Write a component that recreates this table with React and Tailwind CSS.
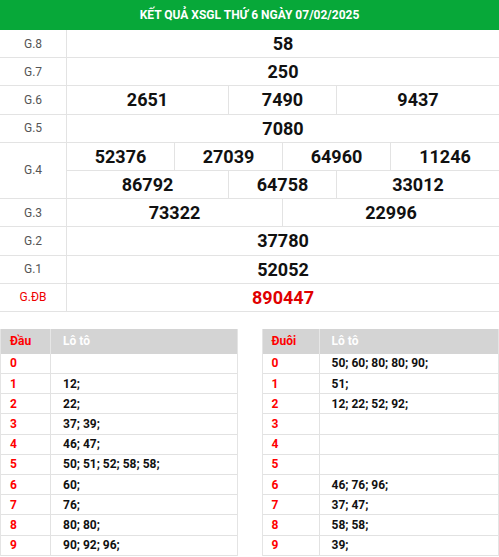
import React from 'react'

const font = { fontFamily: 'Roboto, "Liberation Sans", sans-serif' }

const rows = [
  { label: 'G.8', lines: [[{ n: '58', span: 'col-span-24' }]] },
  { label: 'G.7', lines: [[{ n: '250', span: 'col-span-24' }]] },
  {
    label: 'G.6',
    lines: [[
      { n: '2651', span: 'col-span-9' },
      { n: '7490', span: 'col-span-6' },
      { n: '9437', span: 'col-span-9' },
    ]],
  },
  { label: 'G.5', lines: [[{ n: '7080', span: 'col-span-24' }]] },
  {
    label: 'G.4',
    lines: [
      [
        { n: '52376', span: 'col-span-6' },
        { n: '27039', span: 'col-span-6' },
        { n: '64960', span: 'col-span-6' },
        { n: '11246', span: 'col-span-6' },
      ],
      [
        { n: '86792', span: 'col-span-9' },
        { n: '64758', span: 'col-span-6' },
        { n: '33012', span: 'col-span-9' },
      ],
    ],
  },
  {
    label: 'G.3',
    lines: [[
      { n: '73322', span: 'col-span-12' },
      { n: '22996', span: 'col-span-12' },
    ]],
  },
  { label: 'G.2', lines: [[{ n: '37780', span: 'col-span-24' }]] },
  { label: 'G.1', lines: [[{ n: '52052', span: 'col-span-24' }]] },
  { label: 'G.ĐB', lines: [[{ n: '890447', span: 'col-span-24' }]], special: true },
]

const dau = ['', '12;', '22;', '37; 39;', '46; 47;', '50; 51; 52; 58; 58;', '60;', '76;', '80; 80;', '90; 92; 96;']
const duoi = ['50; 60; 80; 80; 90;', '51;', '12; 22; 52; 92;', '', '', '', '46; 76; 96;', '37; 47;', '58; 58;', '39;']

const LotoTable = ({ head, firstW, data }) => (
  <div className="border-x border-[#e4e4e4]">
    <div className="flex h-[25px] bg-[#d4d4d4] text-[12px] font-bold">
      <div className={`${firstW} shrink-0 flex items-center pl-[9px] text-[#f00] border-r border-[#e6e6e6]`}>
        {head}
      </div>
      <div className="flex-1 flex items-center pl-[12px] text-white">Lô tô</div>
    </div>
    {data.map((v, i) => (
      <div key={i} className="flex h-[20.2px] border-b border-[#e2e2e2] text-[12px] font-bold">
        <div className={`${firstW} shrink-0 flex items-center pl-[9px] text-[#f00] border-r border-[#e2e2e2]`}>
          {i}
        </div>
        <div className="flex-1 flex items-center pl-[12px] text-[#111]">{v}</div>
      </div>
    ))}
  </div>
)

export default function App() {
  return (
    <div className="w-[499px] bg-white" style={font}>
      <div className="h-[30px] bg-[#07a839] flex items-center justify-center text-white text-[12px] font-bold">
        KẾT QUẢ XSGL THỨ 6 NGÀY 07/02/2025
      </div>

      {rows.map(row => (
        <div key={row.label} className="flex">
          <div
            className={`w-[67px] shrink-0 flex items-center justify-center border-r border-b border-[#e3e3e3] text-[12px] ${
              row.special ? 'text-[#e00]' : 'text-[#555]'
            }`}
          >
            {row.label}
          </div>
          <div className="flex-1 flex flex-col">
            {row.lines.map((line, li) => (
              <div key={li} className="grid grid-cols-24 h-[28.2px] border-b border-[#e3e3e3]">
                {line.map((c, ci) => (
                  <div
                    key={ci}
                    className={`${c.span} flex items-center justify-center text-[18px] font-bold ${
                      ci < line.length - 1 ? 'border-r border-[#e3e3e3]' : ''
                    } ${row.special ? 'text-[#e00000]' : 'text-[#111]'}`}
                  >
                    {c.n}
                  </div>
                ))}
              </div>
            ))}
          </div>
        </div>
      ))}

      <div className="grid grid-cols-2 gap-6 mt-[17px]">
        <LotoTable head="Đầu" firstW="w-[50px]" data={dau} />
        <LotoTable head="Đuôi" firstW="w-[57px]" data={duoi} />
      </div>
    </div>
  )
}
